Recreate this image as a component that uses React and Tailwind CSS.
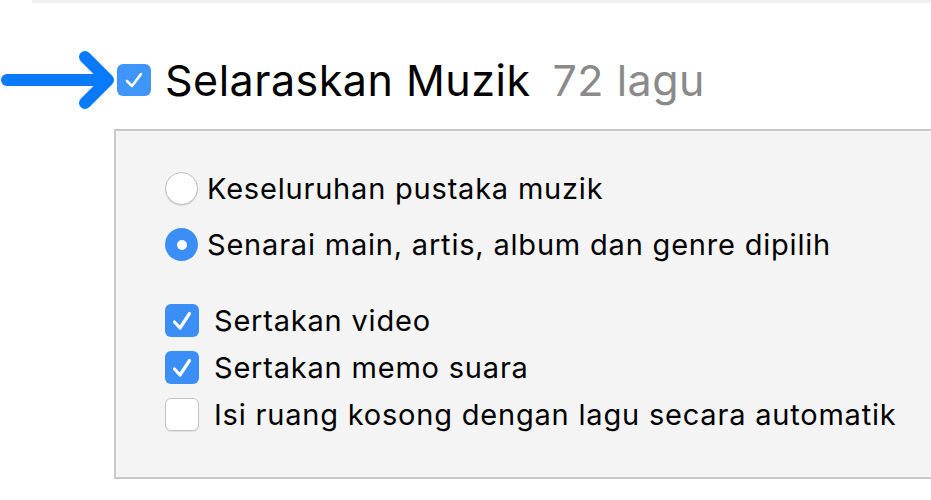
import React from 'react';

const font = { fontFamily: 'Inter, "Noto Sans", sans-serif' };

function Check({ checked, big }) {
  if (!checked) {
    return (
      <span className="flex h-[33px] w-[34px] shrink-0 rounded-[6px] border border-[#c3c3c3] bg-white shadow-[0_1px_1px_rgba(0,0,0,0.08)]" />
    );
  }
  return (
    <span
      className={
        big
          ? 'flex h-[32px] w-[34px] shrink-0 items-center justify-center rounded-[6px] bg-[#3f95f8]'
          : 'flex h-[33px] w-[34px] shrink-0 items-center justify-center rounded-[6px] bg-[#3b8ef6]'
      }
    >
      {big ? (
        <svg width="20" height="18" viewBox="0 0 20 18" fill="none" stroke="white" strokeWidth="2.6" strokeLinecap="round" strokeLinejoin="round">
          <path d="M3 10 L8 15 L17 3" />
        </svg>
      ) : (
        <svg width="22" height="22" viewBox="0 0 22 22" fill="none" stroke="white" strokeWidth="3.2" strokeLinecap="round" strokeLinejoin="round">
          <path d="M3.5 12 L9 18 L18.5 3.5" />
        </svg>
      )}
    </span>
  );
}

function Radio({ selected }) {
  if (selected) {
    return (
      <span className="flex h-[33px] w-[33px] shrink-0 items-center justify-center rounded-full bg-[#3b8ef6]">
        <span className="h-[10px] w-[10px] rounded-full bg-white" />
      </span>
    );
  }
  return (
    <span className="flex h-[33px] w-[33px] shrink-0 rounded-full border border-[#bdbdbd] bg-white shadow-[0_1px_1px_rgba(0,0,0,0.1)]" />
  );
}

export default function App() {
  return (
    <div className="relative h-[500px] w-[931px] overflow-hidden bg-white text-black" style={font}>
      <div className="ml-[32px] h-[3px] bg-[#f0f0f0]" />

      {/* header */}
      <div className="mt-[42px] flex h-[70px] items-center">
        <svg width="116" height="70" viewBox="0 0 116 70" fill="none" stroke="#0a7aff" strokeWidth="12" strokeLinecap="round" strokeLinejoin="round" className="shrink-0">
          <path d="M7 35 H106" />
          <path d="M85 12 L108 35 L85 58" />
        </svg>
        <span className="ml-[1px]">
          <Check checked big />
        </span>
        <span className="ml-[14px] text-[43px] leading-none tracking-[0.5px]">Selaraskan Muzik</span>
        <span className="ml-[22px] text-[43px] leading-none tracking-[0.5px] text-[#8a8a8a]">72 lagu</span>
      </div>

      {/* panel */}
      <div className="ml-[114px] mt-[14px] h-[350px] w-[840px] border-2 border-[#c8c8c8] bg-[#f4f4f4] pl-[49px] pt-[41px] text-[29px] leading-none tracking-[0.8px]">
        <div className="flex flex-col gap-[23px]">
          <div className="flex items-center gap-[9px]">
            <Radio />
            <span>Keseluruhan pustaka muzik</span>
          </div>
          <div className="flex items-center gap-[9px]">
            <Radio selected />
            <span>Senarai main, artis, album dan genre dipilih</span>
          </div>
        </div>
        <div className="mt-[43px] flex flex-col gap-[14px]">
          <div className="flex items-center gap-[15px]">
            <Check checked />
            <span>Sertakan video</span>
          </div>
          <div className="flex items-center gap-[15px]">
            <Check checked />
            <span>Sertakan memo suara</span>
          </div>
          <div className="flex items-center gap-[15px]">
            <Check />
            <span>Isi ruang kosong dengan lagu secara automatik</span>
          </div>
        </div>
      </div>
    </div>
  );
}
